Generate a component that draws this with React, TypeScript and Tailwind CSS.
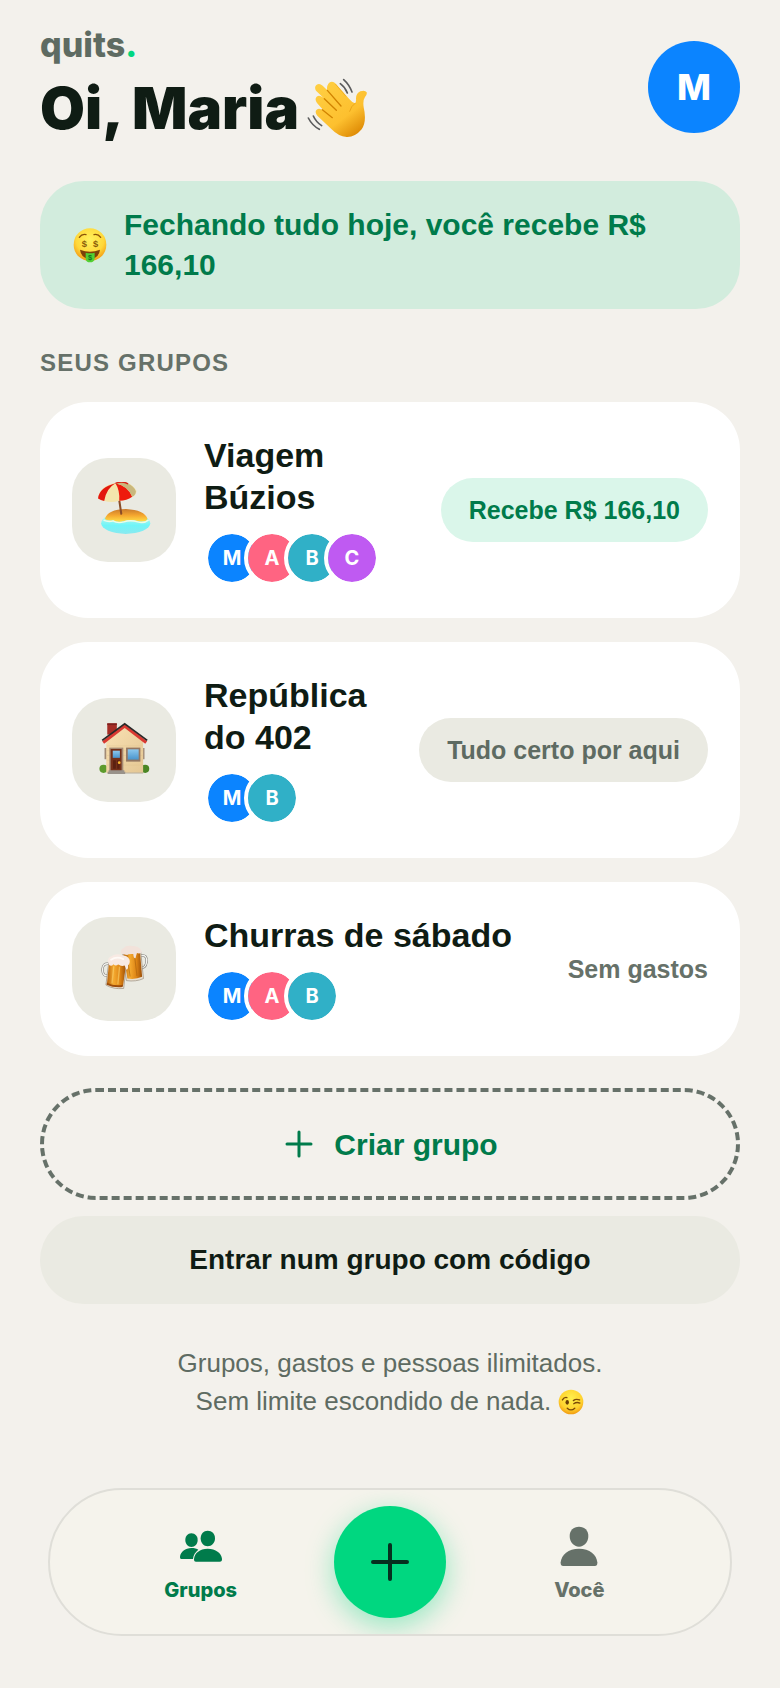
import type { ReactNode } from "react";
import clsx from "clsx";

type Member = "M" | "A" | "B" | "C";

type Group = {
  name: string;
  icon: ReactNode;
  members: Member[];
  status: string;
  tone: "positive" | "settled" | "empty";
};

const memberColors: Record<Member, string> = {
  M: "bg-[#0b84ff]",
  A: "bg-[#ff6482]",
  B: "bg-[#30b0c7]",
  C: "bg-[#bf5af2]",
};

function WaveEmoji() {
  return (
    <svg viewBox="920 230 180 180" className="size-15 shrink-0" role="img" aria-label="Mão acenando">
      <defs>
        <linearGradient id="hand" x1="0" y1="0" x2="0.7" y2="1">
          <stop offset="0" stopColor="#ffd044" />
          <stop offset="0.7" stopColor="#fdc02f" />
          <stop offset="1" stopColor="#e08e08" />
        </linearGradient>
      </defs>
      <path
        d="M976 334L950 305Q942 294 949 286Q957 279 967 288L973 293L947 268Q941 258 948 251Q957 244 967 253L981 267Q978 256 984 247Q992 236 1004 245L1046 292Q1056 304 1064 306Q1068 302 1067 291Q1067 276 1080 270Q1094 265 1099 273Q1101 279 1094 287Q1087 297 1090 318Q1100 360 1084 384Q1064 408 1039 407Q1014 405 993 383L951 343Q942 332 949 325Q957 319 968 327Z"
        fill="url(#hand)"
      />
      <g fill="none" stroke="#d18300" strokeWidth="4" strokeLinecap="round">
        <path d="M981 267L1022 314" />
        <path d="M972 292L1008 327" />
        <path d="M966 325L996 349" />
        <path d="M1006 249L1036 284" stroke="#eba51a" strokeWidth="2" />
        <path d="M1064 306Q1052 314 1048 330" stroke="#eba51a" strokeWidth="3" />
      </g>
      <g fill="none" stroke="#5b5c5d" strokeWidth="5" strokeLinecap="round">
        <path d="M1030 235Q1046 249 1055 272" />
        <path d="M1020 247Q1034 257 1041 275" />
        <path d="M939 344Q947 362 964 373" />
        <path d="M924 350Q935 372 957 384" />
      </g>
    </svg>
  );
}

function MoneyEmoji() {
  return (
    <svg viewBox="216 197 108 108" className="size-9 shrink-0" role="img" aria-label="Rosto com cifrões">
      <defs>
        <radialGradient id="moneyFace" cx="0.5" cy="0.35" r="0.65">
          <stop offset="0" stopColor="#fff15c" />
          <stop offset="0.65" stopColor="#ffd83a" />
          <stop offset="1" stopColor="#f39a12" />
        </radialGradient>
      </defs>
      <circle cx="270" cy="250" r="49" fill="url(#moneyFace)" />
      <path d="M238 228Q246 217 258 220M282 220Q294 217 302 228" fill="none" stroke="#8a5208" strokeWidth="4" strokeLinecap="round" />
      <g fill="#8a5c08" fontFamily="Liberation Sans, sans-serif" fontWeight="700" fontSize="28" textAnchor="middle">
        <text x="253" y="257">$</text>
        <text x="287" y="257">$</text>
      </g>
      <path d="M240 265Q270 277 300 265Q297 291 270 293Q243 291 240 265Z" fill="#7d4108" />
      <path d="M257 274Q270 277 284 274V292Q282 303 270 303Q258 303 257 292Z" fill="#52cf32" />
      <text x="270" y="297" fill="#14741f" fontFamily="Liberation Sans, sans-serif" fontWeight="700" fontSize="22" textAnchor="middle">
        $
      </text>
    </svg>
  );
}

function WinkEmoji() {
  return (
    <svg viewBox="1204 172 76 76" className="inline-block size-[26px] align-[-5px]" role="img" aria-label="Piscadinha">
      <defs>
        <radialGradient id="winkFace" cx="0.5" cy="0.35" r="0.65">
          <stop offset="0" stopColor="#fff04e" />
          <stop offset="0.7" stopColor="#ffd22e" />
          <stop offset="1" stopColor="#f19a10" />
        </radialGradient>
      </defs>
      <circle cx="1242" cy="210" r="36" fill="url(#winkFace)" />
      <ellipse cx="1231" cy="211" rx="5" ry="7" fill="#6b3d05" />
      <g fill="none" stroke="#7c4a08" strokeWidth="4" strokeLinecap="round">
        <path d="M1217 204Q1222 195 1230 197" />
        <path d="M1249 206Q1256 200 1267 204" />
        <path d="M1250 215Q1258 209 1268 213" />
        <path d="M1231 228Q1242 238 1253 228" />
      </g>
    </svg>
  );
}

function BeachEmoji() {
  return (
    <svg viewBox="200 278 164 164" className="size-14" role="img" aria-label="Praia">
      <defs>
        <linearGradient id="sand" x1="0" y1="0" x2="0" y2="1">
          <stop offset="0" stopColor="#c97a2b" />
          <stop offset="0.5" stopColor="#f5a72f" />
          <stop offset="1" stopColor="#ffe04a" />
        </linearGradient>
        <linearGradient id="sea" x1="0" y1="0" x2="0" y2="1">
          <stop offset="0" stopColor="#d5f7ea" />
          <stop offset="0.6" stopColor="#6ff5f8" />
          <stop offset="1" stopColor="#8be9ef" />
        </linearGradient>
      </defs>
      <ellipse cx="287" cy="399" rx="72" ry="31" fill="url(#sea)" />
      <path d="M226 386Q234 358 288 357Q342 360 351 386Q344 397 322 392Q300 386 282 392Q262 398 250 390Q236 393 226 386Z" fill="url(#sand)" />
      <path d="M222 390Q236 396 250 392Q262 400 282 395Q300 388 322 395Q342 400 354 389" fill="none" stroke="#effbe6" strokeWidth="4" />
      <path d="M262 290L274 371" stroke="#8b4d28" strokeWidth="6" strokeLinecap="round" />
      <path d="M206 326Q210 289 257 281Q303 273 319 304Q317 318 306 321Q290 332 268 333Q246 340 224 334Q216 331 206 326Z" fill="#f4e5ac" />
      <path d="M206 326Q210 294 257 282Q230 297 224 334Q214 331 206 326Z" fill="#e3170e" />
      <path d="M257 282Q293 289 306 321Q290 333 268 333Q270 302 257 282Z" fill="#ee1a0c" />
      <path d="M257 282Q278 272 291 282Q312 290 317 306Q316 318 306 321Q292 290 257 282Z" fill="#c9b77d" />
      <path d="M257 282Q279 274 294 284" fill="none" stroke="#d72316" strokeWidth="4" />
    </svg>
  );
}

function HouseEmoji() {
  return (
    <svg viewBox="200 248 164 164" className="size-14" role="img" aria-label="Casa">
      <defs>
        <linearGradient id="wall" x1="0" y1="0" x2="1" y2="1">
          <stop offset="0" stopColor="#f9e1b3" />
          <stop offset="1" stopColor="#e4c794" />
        </linearGradient>
        <linearGradient id="glass" x1="0" y1="0" x2="0" y2="1">
          <stop offset="0" stopColor="#8cc8ee" />
          <stop offset="1" stopColor="#4a95cd" />
        </linearGradient>
      </defs>
      <circle cx="222" cy="385" r="12" fill="#5d9b2d" />
      <circle cx="344" cy="385" r="12" fill="#4a8624" />
      <path d="M225 324H232V357H225ZM336 324H342V357H336Z" fill="#a08a76" />
      <path d="M233 252H261V285H233Z" fill="#a52d26" />
      <path d="M233 252H261V257H233Z" fill="#7d211e" />
      <path d="M230 302L284 260L338 302V397H230Z" fill="url(#wall)" />
      <path d="M232 318H336M232 332H336M232 346H336M232 360H336M232 374H336" stroke="#ddbe88" strokeWidth="1" />
      <path d="M221 308L284 260L347 308" fill="none" stroke="#da3a32" strokeWidth="9" />
      <path d="M218 302L284 253L350 302" fill="none" stroke="#2b2928" strokeWidth="5" />
      <path d="M239 323H280V392H239Z" fill="#a58a73" />
      <path d="M243 327H275V392H243Z" fill="#743019" />
      <path d="M249 332H270V353H249Z" fill="url(#glass)" />
      <path d="M250 360H258V385H250ZM262 360H269V385H262Z" fill="#5b2111" />
      <circle cx="268" cy="367" r="4" fill="#f9b62d" />
      <path d="M288 323H330V364H288Z" fill="#937762" />
      <path d="M293 328H325V358H293Z" fill="url(#glass)" />
      <path d="M237 389H283V394H286V400H234V394H237Z" fill="#99928a" />
      <path d="M286 396H338V399H286Z" fill="#b9b0a0" />
    </svg>
  );
}

function BeerEmoji() {
  return (
    <svg viewBox="200 215 164 164" className="size-14" role="img" aria-label="Canecas de cerveja">
      <defs>
        <linearGradient id="beer" x1="0" y1="0" x2="1" y2="0">
          <stop offset="0" stopColor="#b5610c" />
          <stop offset="0.35" stopColor="#f5aa30" />
          <stop offset="0.7" stopColor="#dc8314" />
          <stop offset="1" stopColor="#9c4f08" />
        </linearGradient>
      </defs>
      <g fill="none" strokeLinecap="round">
        <path d="M331 258Q351 254 348 277Q345 297 330 291" stroke="#77756f" strokeWidth="7" />
        <path d="M331 258Q351 254 348 277Q345 297 330 291" stroke="#f5f5f2" strokeWidth="4" />
        <path d="M238 282Q219 279 219 299Q220 320 235 316" stroke="#77756f" strokeWidth="7" />
        <path d="M238 282Q219 279 219 299Q220 320 235 316" stroke="#f5f5f2" strokeWidth="4" />
      </g>
      <path d="M278 250L331 246L339 325Q317 335 289 331Z" fill="#e9dfcf" stroke="#9a8c7c" strokeWidth="2" />
      <path d="M280 252L329 249L335 320Q315 329 292 325Z" fill="url(#beer)" />
      <path d="M290 253L300 319M312 251L320 317" stroke="#a9610d" strokeWidth="3" opacity="0.6" />
      <path d="M274 252Q269 242 280 236Q289 227 305 230Q324 230 331 240Q338 248 330 251Q323 252 320 250Q317 258 316 265Q310 267 309 253Q295 252 291 256Z" fill="#f2e2da" />
      <path d="M237 279L289 283L281 354Q251 357 229 344Z" fill="#eee5d7" stroke="#9a8c7c" strokeWidth="2" />
      <path d="M238 281L288 285L279 347Q253 351 232 341Z" fill="url(#beer)" />
      <path d="M252 289L247 339M269 290L264 342" stroke="#fbd16b" strokeWidth="4" opacity="0.6" />
      <path d="M232 337Q253 348 279 343L278 350Q252 353 231 343Z" fill="#9c4d0d" />
      <path d="M236 279Q232 265 245 260Q259 250 277 257Q293 258 298 269Q301 280 294 286Q295 298 289 299Q286 292 284 287Q273 291 265 283Q258 290 251 283Q246 290 239 286Z" fill="#f8eae3" />
      <path d="M244 270Q260 259 280 268" fill="none" stroke="#fffaf6" strokeWidth="5" strokeLinecap="round" />
    </svg>
  );
}

function PeopleIcon() {
  return (
    <svg viewBox="438 156 144 144" className="size-12" fill="currentColor" aria-hidden="true">
      <path d="M481 190C493 190 500 199 500 210C500 222 492 231 481 231C471 231 463 222 463 210C463 199 470 190 481 190Z" />
      <path d="M481 234C490 234 498 236 502 239C493 246 487 255 486 267H453C448 267 447 264 447 260C449 245 463 234 481 234Z" />
      <path d="M530 182C543 182 552 191 552 205C552 219 542 229 530 229C518 229 509 219 509 205C509 191 518 182 530 182Z" />
      <path d="M530 236C554 236 571 249 573 266C573 272 572 275 566 275H495C490 275 489 272 489 266C491 249 506 236 530 236Z" />
    </svg>
  );
}

function PersonIcon() {
  return (
    <svg viewBox="528 156 144 144" className="size-12" fill="currentColor" aria-hidden="true">
      <path d="M600 170C617 170 628 181 628 198C628 216 616 230 600 230C584 230 572 216 572 198C572 181 583 170 600 170Z" />
      <path d="M600 236C632 236 653 254 655 277C655 285 654 288 647 288H553C546 288 545 285 545 277C547 254 568 236 600 236Z" />
    </svg>
  );
}

const groups: Group[] = [
  {
    name: "Viagem Búzios",
    icon: <BeachEmoji />,
    members: ["M", "A", "B", "C"],
    status: "Recebe R$ 166,10",
    tone: "positive",
  },
  {
    name: "República do 402",
    icon: <HouseEmoji />,
    members: ["M", "B"],
    status: "Tudo certo por aqui",
    tone: "settled",
  },
  {
    name: "Churras de sábado",
    icon: <BeerEmoji />,
    members: ["M", "A", "B"],
    status: "Sem gastos",
    tone: "empty",
  },
];

function GroupCard({ group }: { group: Group }) {
  return (
    <a href="#grupo" className="flex items-center gap-7 rounded-[48px] bg-white p-8">
      <div className="flex size-26 shrink-0 items-center justify-center rounded-[36px] bg-[#eaeae2]">
        {group.icon}
      </div>
      <div className="min-w-0 flex-1 space-y-3">
        <h3 className="text-[34px] leading-[42px] font-bold">{group.name}</h3>
        <div className="flex -space-x-4">
          {group.members.map((member) => (
            <span
              key={member}
              className={clsx(
                "flex size-14 items-center justify-center rounded-full border-4 border-white bg-clip-padding font-[Inter,sans-serif] text-[20px] font-bold text-white",
                memberColors[member]
              )}
            >
              {member}
            </span>
          ))}
        </div>
      </div>
      <span
        className={clsx(
          "shrink-0 text-[25px] leading-8 font-bold",
          group.tone === "positive" && "rounded-full bg-[#daf6ea] px-7 py-4 text-[#007b4b]",
          group.tone === "settled" && "rounded-full bg-[#eaeae2] px-7 py-4 text-[#5e6b62]",
          group.tone === "empty" && "text-[#667169]"
        )}
      >
        {group.status}
      </span>
    </a>
  );
}

export default function App() {
  return (
    <div className="min-h-screen bg-[#f3f1ec] px-10 pt-6 pb-13 font-['Liberation_Sans',Arial,sans-serif] text-[#0f1c14]">
      <header className="flex items-center justify-between font-[Inter,sans-serif]">
        <div>
          <p className="text-[34px] leading-[42px] font-extrabold text-[#5e6b62]">
            quits<span className="text-[#00d780]">.</span>
          </p>
          <h1 className="flex items-center gap-2 text-[58px] leading-[84px] font-black">
            Oi, Maria <WaveEmoji />
          </h1>
        </div>
        <button
          type="button"
          aria-label="Abrir perfil"
          className="size-23 shrink-0 rounded-full bg-[#0b84ff] text-[36px] font-extrabold text-white"
        >
          M
        </button>
      </header>

      <main>
        <section className="mt-[31px] flex items-center gap-4 rounded-[44px] bg-[#d2ecdd] px-8 py-6">
          <MoneyEmoji />
          <p className="text-[30px] leading-10 font-bold text-[#007b4b]">
            Fechando tudo hoje, você recebe R$ 166,10
          </p>
        </section>

        <h2 className="mt-10 mb-[25px] text-[24px] leading-7 font-bold tracking-wider text-[#667169]">
          SEUS GRUPOS
        </h2>
        <div className="flex flex-col gap-6">
          {groups.map((group) => (
            <GroupCard key={group.name} group={group} />
          ))}
        </div>

        <div className="mt-8 flex flex-col gap-4">
          <button
            type="button"
            className="flex h-28 items-center justify-center gap-5 rounded-full border-4 border-dashed border-[#667169] text-[30px] font-bold text-[#007b4b]"
          >
            <svg viewBox="0 0 32 32" className="size-8" aria-hidden="true">
              <path d="M17 4V28M5 16H29" stroke="currentColor" strokeWidth="3" strokeLinecap="round" />
            </svg>
            Criar grupo
          </button>
          <button type="button" className="h-22 rounded-full bg-[#eaeae2] text-[28px] font-bold">
            Entrar num grupo com código
          </button>
        </div>

        <p className="mt-10 text-center text-[26px] leading-[38px] text-[#5e6b62]">
          Grupos, gastos e pessoas ilimitados.
          <br />
          Sem limite escondido de nada. <WinkEmoji />
        </p>
      </main>

      <nav className="mx-2 mt-17 grid h-37 grid-cols-3 items-center justify-items-center overflow-hidden rounded-full border-2 border-[#dfded8] bg-[#f5f3ec] px-14 font-[Inter,sans-serif] text-[20px] leading-6 font-extrabold">
        <a href="#grupos" aria-current="page" className="flex flex-col items-center gap-2 text-[#007b4b]">
          <PeopleIcon />
          Grupos
        </a>
        <button
          type="button"
          aria-label="Adicionar gasto"
          className="flex size-28 items-center justify-center rounded-full bg-[#00d780] text-[#06301f] shadow-[0_8px_28px_rgba(0,215,128,0.4)]"
        >
          <svg viewBox="0 0 48 48" className="size-12" aria-hidden="true">
            <path d="M24 7V41M7 24H41" stroke="currentColor" strokeWidth="4" strokeLinecap="round" />
          </svg>
        </button>
        <a href="#voce" className="flex flex-col items-center gap-2 text-[#667169]">
          <PersonIcon />
          Você
        </a>
      </nav>
    </div>
  );
}
